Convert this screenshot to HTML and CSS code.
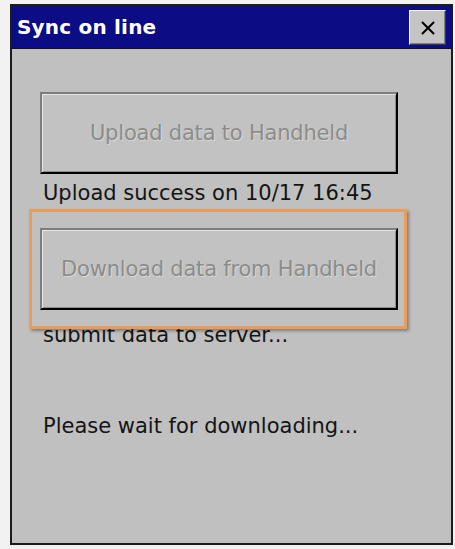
FILE: index.html
```html
<!DOCTYPE html>
<html>
<head>
    <meta charset="utf-8">
    <title>Sync on line</title>
    <link rel="stylesheet" href="styles.css">
</head>
<body>

    <div class="window">
        <div class="title">
            <span>Sync on line</span>
            <button class="close">
                <svg width="16" height="16" viewBox="0 0 16 16"><path d="M2 2L14 14M14 2L2 14" stroke="#000" stroke-width="2"/></svg>
            </button>
        </div>

        <div class="content">
            <button class="btn">Upload data to Handheld</button>
            <p class="status">Upload success on 10/17 16:45</p>

            <div class="hl">
                <button class="btn">Download data from Handheld</button>
                <span class="mark"></span>
            </div>
            <p class="status submit">submit data to server...</p>

            <p class="status wait">Please wait for downloading...</p>
        </div>
    </div>

</body>
</html>
```

FILE: styles.css
```css
*{box-sizing:border-box;  margin:0;  }
body{background:#f2f2f2;  padding:4px 0 0 10px;  font-family:'DejaVu Sans','Liberation Sans',sans-serif;  }

.window{width:443px;  height:541px;  border:2px solid #1c1c1c;  background:#c0c0c0;  display:flex;  flex-direction:column;  }

.title{height:43px;  background:#0c0c84;  border-bottom:1px solid #111;  display:flex;  align-items:flex-start;  justify-content:space-between;  padding:4px 5px 0 5px;  }
.title span{color:#fff;  font-weight:bold;  font-size:20px;  line-height:35px;  letter-spacing:0.2px;  }

.close{width:37px;  height:35px;  background:#c4c4c4;  border:1px solid;  border-color:#f4f4f4 #3a3a3a #3a3a3a #f4f4f4;  box-shadow:inset -1px -1px 0 #808080;  display:flex;  align-items:center;  justify-content:center;  padding:0;  }

.content{flex:1;  padding:43px 0 0 28px;  position:relative;  }

.btn{display:block;  width:358px;  height:82px;  background:#c2c2c2;  border:2px solid;  border-color:#7c7c7c #000 #000 #7c7c7c;  box-shadow:inset 1px 1px 0 #e6e6e6, inset -1px -1px 0 #8a8a8a;  color:#8c8c8c;  font:21px 'DejaVu Sans','Liberation Sans',sans-serif;  letter-spacing:-0.2px;  text-shadow:1px 1px 0 rgba(255,255,255,0.35);  }

.status{font-size:21px;  line-height:23px;  color:#141414;  margin:8px 0 0 3px;  }

.hl{position:relative;  margin-top:23px;  width:358px;  }
.mark{position:absolute;  left:-11px;  top:-19px;  width:378px;  height:120px;  border:3px solid #ea9d58;  box-shadow:2px 2px 3px rgba(0,0,0,0.35);  }

.submit{margin-top:14px;  }
.wait{margin-top:68px;  }
```
